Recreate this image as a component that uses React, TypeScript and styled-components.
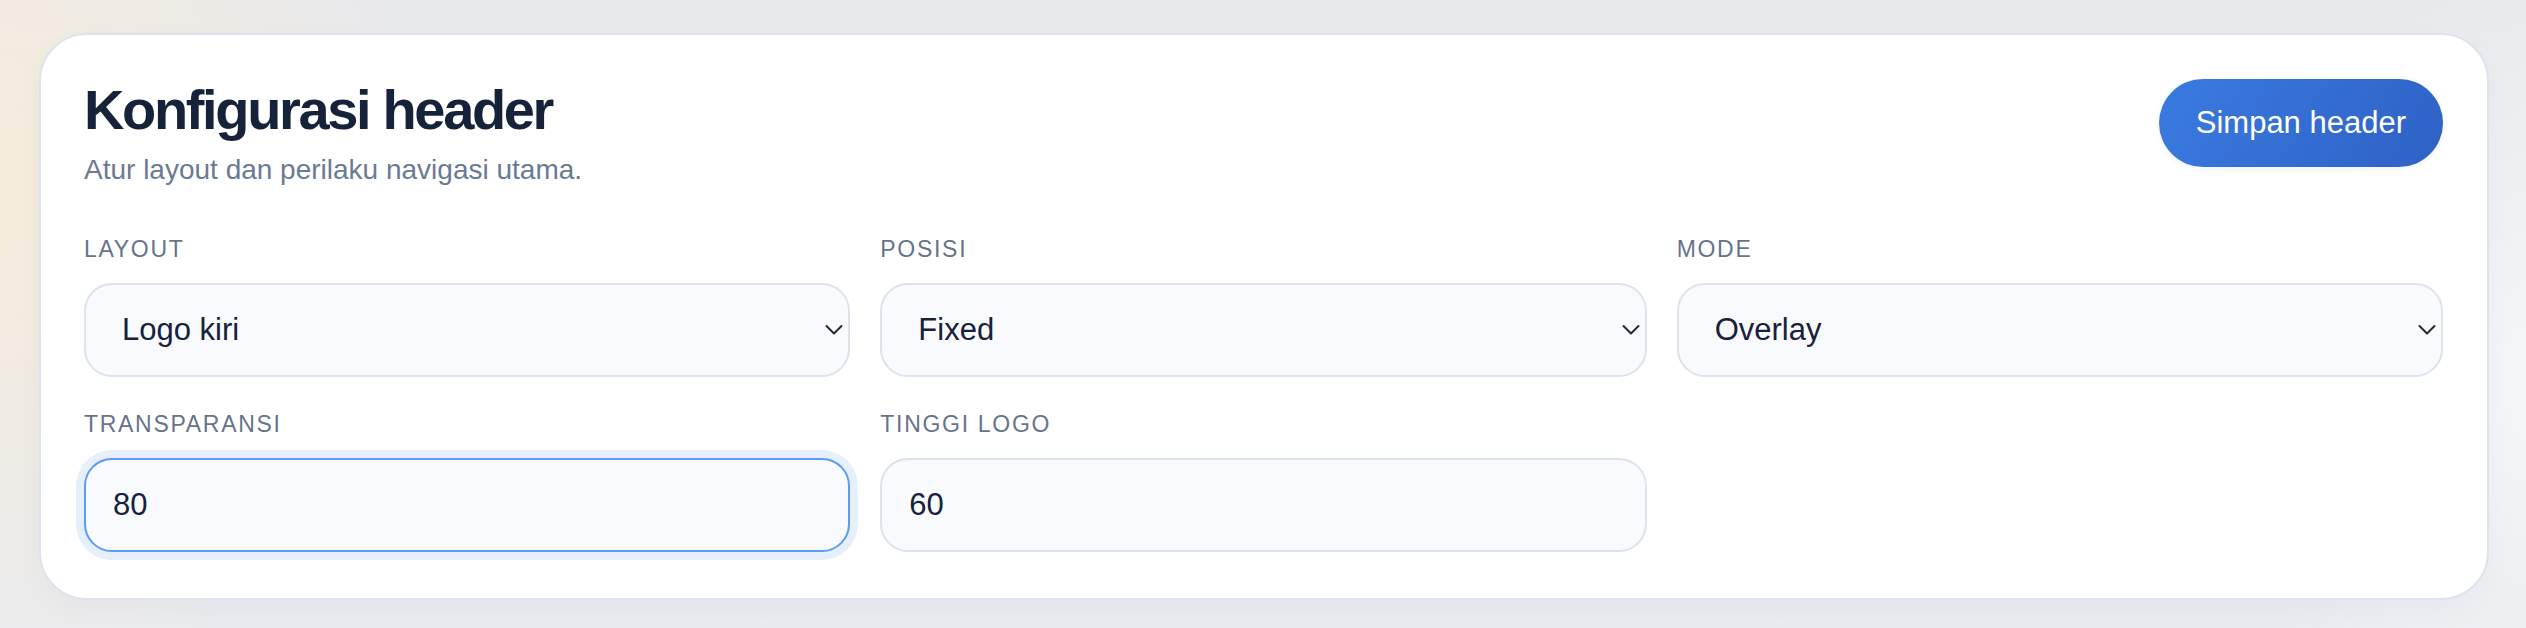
import React from 'react'
import styled, { createGlobalStyle } from 'styled-components'

const GlobalStyle = createGlobalStyle`
  * {
    box-sizing: border-box;
  }

  body {
    margin: 0;
    font-family: "Liberation Sans", Arial, sans-serif;
    background: #e9ebf0;
  }
`

export const Page = styled.div`
  min-height: 628px;
  padding: 33px 37px 31px 39px;
  background:
    radial-gradient(ellipse 420px 520px at 0% 30%, rgba(246, 236, 218, 0.95), rgba(246, 236, 218, 0) 100%),
    radial-gradient(ellipse 300px 400px at 100% 60%, rgba(246, 247, 250, 0.9), rgba(246, 247, 250, 0) 100%),
    linear-gradient(180deg, #e8e9ed 0%, #e9ebf0 100%);
`

export const Card = styled.section`
  background: #fff;
  border: 2px solid #dde3ee;
  border-radius: 48px;
  padding: 44px 44px 46px 43px;
  box-shadow: 0 10px 30px rgba(30, 41, 59, 0.03);
`

export const Header = styled.header`
  display: flex;
  justify-content: space-between;
  align-items: flex-start;
`

export const Title = styled.h1`
  margin: 0;
  font-size: 56px;
  line-height: 1.1;
  font-weight: 700;
  letter-spacing: -2.35px;
  color: #16223a;
`

export const Subtitle = styled.p`
  margin: 9px 0 0;
  font-size: 28px;
  line-height: 1.4;
  color: #6b7a94;
`

export const SaveButton = styled.button`
  height: 88px;
  padding: 0 37px;
  border: none;
  border-radius: 44px;
  font-family: inherit;
  font-size: 31px;
  color: #fff;
  background: linear-gradient(120deg, #3a7be0 0%, #2e61c5 100%);
  box-shadow: 0 2px 6px rgba(46, 97, 197, 0.08);
  cursor: pointer;
`

export const Fields = styled.div`
  display: grid;
  grid-template-columns: repeat(3, 1fr);
  column-gap: 30px;
  row-gap: 33px;
  margin-top: 46px;
`

export const Field = styled.label`
  display: flex;
  flex-direction: column;
  gap: 18px;
`

export const FieldLabel = styled.span`
  font-size: 23px;
  line-height: 1.3;
  letter-spacing: 1.7px;
  text-transform: uppercase;
  color: #66738b;
`

export const SelectWrap = styled.div`
  position: relative;

  svg {
    position: absolute;
    right: 7px;
    top: 50%;
    transform: translateY(-50%);
    pointer-events: none;
  }
`

const control = `
  width: 100%;
  height: 94px;
  border: 2px solid #dde3ec;
  border-radius: 28px;
  background: #f8fafe;
  font-family: "Liberation Sans", Arial, sans-serif;
  font-size: 31px;
  color: #16223a;
  outline: none;
`

export const Select = styled.select`
  ${control}
  appearance: none;
  padding: 0 40px 0 36px;
`

export const TextInput = styled.input<{ $focused?: boolean }>`
  ${control}
  padding: 0 27px;
  ${p => p.$focused && `
    border-color: #5e9bf5;
    box-shadow: 0 0 0 8px #e6effc;
  `}
`

const Chevron = () => (
  <svg width="18" height="11" viewBox="0 0 18 11" fill="none">
    <polyline points="1.5,1.5 9,9 16.5,1.5" stroke="#1e293b" strokeWidth="2" strokeLinecap="round" strokeLinejoin="round" />
  </svg>
)

const selects = [
  { label: 'Layout', value: 'Logo kiri', options: ['Logo kiri', 'Logo tengah', 'Logo kanan'] },
  { label: 'Posisi', value: 'Fixed', options: ['Fixed', 'Sticky', 'Static'] },
  { label: 'Mode', value: 'Overlay', options: ['Overlay', 'Solid'] },
]

const App = () => {
  return (
    <>
      <GlobalStyle />
      <Page>
        <Card>
          <Header>
            <div>
              <Title>Konfigurasi header</Title>
              <Subtitle>Atur layout dan perilaku navigasi utama.</Subtitle>
            </div>
            <SaveButton>Simpan header</SaveButton>
          </Header>

          <Fields>
            {selects.map(s => (
              <Field key={s.label}>
                <FieldLabel>{s.label}</FieldLabel>
                <SelectWrap>
                  <Select defaultValue={s.value}>
                    {s.options.map(o => (
                      <option key={o}>{o}</option>
                    ))}
                  </Select>
                  <Chevron />
                </SelectWrap>
              </Field>
            ))}

            <Field>
              <FieldLabel>Transparansi</FieldLabel>
              <TextInput type="number" defaultValue={80} $focused />
            </Field>
            <Field>
              <FieldLabel>Tinggi logo</FieldLabel>
              <TextInput type="number" defaultValue={60} />
            </Field>
          </Fields>
        </Card>
      </Page>
    </>
  )
}

export default App
